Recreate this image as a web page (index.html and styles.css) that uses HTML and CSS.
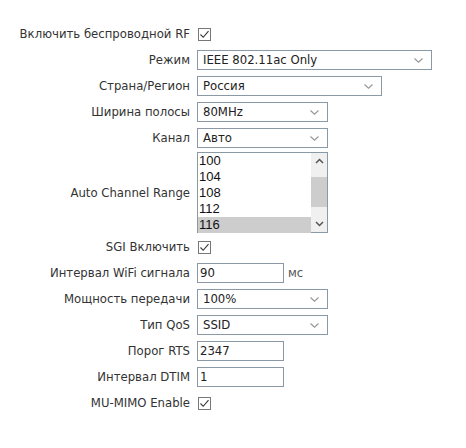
FILE: index.html
```
<html lang="ru">
<head>
    <meta charset="UTF-8">
    <title>Wireless Settings</title>
    <link rel="stylesheet" href="styles.css">
</head>
<body>
    <div class="form">
        <div class="row">
            <label class="lbl">Включить беспроводной RF</label>
            <div class="ctl"><span class="check"><svg width="11" height="11" viewBox="0 0 11 11"><path d="M1.5 5.5 L4.2 8.3 L9.5 2.2" fill="none" stroke="#333" stroke-width="1.1"/></svg></span></div>
        </div>
        <div class="row">
            <label class="lbl">Режим</label>
            <div class="ctl"><div class="select w-wide">IEEE 802.11ac Only<svg class="chev" width="9" height="5" viewBox="0 0 9 5"><path d="M0.5 0.5 L4.5 4.2 L8.5 0.5" fill="none" stroke="#999" stroke-width="1.2"/></svg></div></div>
        </div>
        <div class="row">
            <label class="lbl">Страна/Регион</label>
            <div class="ctl"><div class="select w-mid">Россия<svg class="chev" width="9" height="5" viewBox="0 0 9 5"><path d="M0.5 0.5 L4.5 4.2 L8.5 0.5" fill="none" stroke="#999" stroke-width="1.2"/></svg></div></div>
        </div>
        <div class="row">
            <label class="lbl">Ширина полосы</label>
            <div class="ctl"><div class="select w-small">80MHz<svg class="chev" width="9" height="5" viewBox="0 0 9 5"><path d="M0.5 0.5 L4.5 4.2 L8.5 0.5" fill="none" stroke="#999" stroke-width="1.2"/></svg></div></div>
        </div>
        <div class="row">
            <label class="lbl">Канал</label>
            <div class="ctl"><div class="select w-small">Авто<svg class="chev" width="9" height="5" viewBox="0 0 9 5"><path d="M0.5 0.5 L4.5 4.2 L8.5 0.5" fill="none" stroke="#999" stroke-width="1.2"/></svg></div></div>
        </div>
        <div class="row tall">
            <label class="lbl">Auto Channel Range</label>
            <div class="ctl">
                <div class="listbox">
                    <div class="items">
                        <div class="item">100</div>
                        <div class="item">104</div>
                        <div class="item">108</div>
                        <div class="item">112</div>
                        <div class="item selected">116</div>
                    </div>
                    <div class="scrollbar">
                        <div class="sb-btn"><svg width="9" height="6" viewBox="0 0 9 6"><path d="M1 5 L4.5 1.5 L8 5" fill="none" stroke="#555" stroke-width="1.5"/></svg></div>
                        <div class="sb-track">
                            <div class="sb-thumb"></div>
                        </div>
                        <div class="sb-btn"><svg width="9" height="6" viewBox="0 0 9 6"><path d="M1 1 L4.5 4.5 L8 1" fill="none" stroke="#555" stroke-width="1.5"/></svg></div>
                    </div>
                </div>
            </div>
        </div>
        <div class="row">
            <label class="lbl">SGI Включить</label>
            <div class="ctl"><span class="check"><svg width="11" height="11" viewBox="0 0 11 11"><path d="M1.5 5.5 L4.2 8.3 L9.5 2.2" fill="none" stroke="#333" stroke-width="1.1"/></svg></span></div>
        </div>
        <div class="row">
            <label class="lbl">Интервал WiFi сигнала</label>
            <div class="ctl"><div class="input">90</div><span class="unit">мс</span></div>
        </div>
        <div class="row">
            <label class="lbl">Мощность передачи</label>
            <div class="ctl"><div class="select w-small">100%<svg class="chev" width="9" height="5" viewBox="0 0 9 5"><path d="M0.5 0.5 L4.5 4.2 L8.5 0.5" fill="none" stroke="#999" stroke-width="1.2"/></svg></div></div>
        </div>
        <div class="row">
            <label class="lbl">Тип QoS</label>
            <div class="ctl"><div class="select w-small">SSID<svg class="chev" width="9" height="5" viewBox="0 0 9 5"><path d="M0.5 0.5 L4.5 4.2 L8.5 0.5" fill="none" stroke="#999" stroke-width="1.2"/></svg></div></div>
        </div>
        <div class="row">
            <label class="lbl">Порог RTS</label>
            <div class="ctl"><div class="input">2347</div></div>
        </div>
        <div class="row">
            <label class="lbl">Интервал DTIM</label>
            <div class="ctl"><div class="input">1</div></div>
        </div>
        <div class="row">
            <label class="lbl">MU-MIMO Enable</label>
            <div class="ctl"><span class="check"><svg width="11" height="11" viewBox="0 0 11 11"><path d="M1.5 5.5 L4.2 8.3 L9.5 2.2" fill="none" stroke="#333" stroke-width="1.1"/></svg></span></div>
        </div>
    </div>
</body>
</html>
```

FILE: styles.css
```
body {
    margin: 0;
    background-color: #fff;
    font-family: 'DejaVu Sans', Verdana, sans-serif;
    font-size: 11.7px;
    color: #333;
}

.form {
    padding-top: 21px;
}

.row {
    display: flex;
    align-items: center;
    height: 26px;
}

.row.tall {
    height: 83px;
}

.lbl {
    width: 190px;
    text-align: right;
    white-space: nowrap;
}

.ctl {
    display: flex;
    align-items: center;
    padding-left: 7px;
}

.check {
    display: flex;
    align-items: center;
    justify-content: center;
    width: 11px;
    height: 11px;
    border: 1px solid #777;
    margin-left: 1px;
    background-color: #fff;
}

.select {
    position: relative;
    box-sizing: border-box;
    height: 20px;
    line-height: 18px;
    border: 1px solid #8b99a6;
    padding-left: 5px;
    background-color: #fff;
    color: #222;
}

.chev {
    position: absolute;
    right: 8px;
    top: 7px;
}

.w-wide {
    width: 235px;
}

.w-mid {
    width: 185px;
}

.w-small {
    width: 131px;
}

.input {
    box-sizing: border-box;
    width: 87px;
    height: 20px;
    line-height: 18px;
    border: 1px solid #8b99a6;
    padding-left: 2px;
    color: #222;
}

.unit {
    margin-left: 4px;
    color: #555;
}

.listbox {
    display: flex;
    box-sizing: border-box;
    width: 131px;
    height: 81px;
    border: 1px solid #8b99a6;
    font-family: 'Liberation Sans', Arial, sans-serif;
    font-size: 13px;
}

.items {
    flex: 1;
}

.item {
    height: 16px;
    line-height: 16px;
    padding-left: 1px;
    color: #111;
}

.item.selected {
    background-color: #cdcdcd;
}

.scrollbar {
    display: flex;
    flex-direction: column;
    width: 16px;
    background-color: #f0f0f0;
}

.sb-btn {
    display: flex;
    align-items: center;
    justify-content: center;
    height: 16px;
}

.sb-track {
    flex: 1;
    padding-top: 8px;
}

.sb-thumb {
    height: 30px;
    background-color: #cdcdcd;
}
```
